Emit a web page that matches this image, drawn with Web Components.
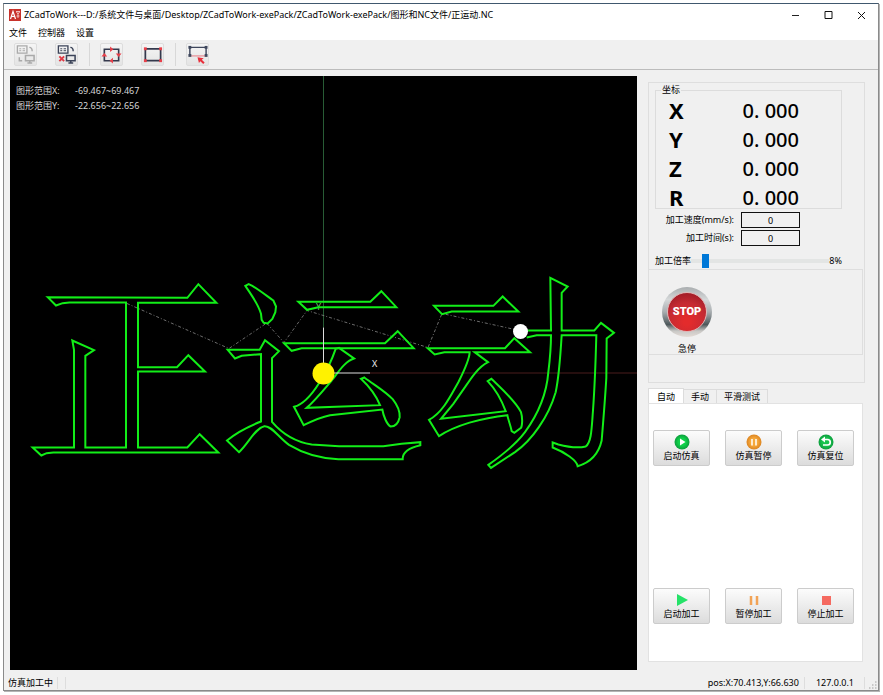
<!DOCTYPE html>
<html lang="zh-CN">
<head>
<meta charset="utf-8">
<title>ZCadToWork</title>
<style>
  html, body {
    height: 100%;
  }

  body {
    box-sizing: border-box;
    margin: 0;
    padding: 3px 4px 4px 3px;
    background: #fff;
    color: #000;
    font: 9px/12px "Noto Sans", "Noto Sans CJK SC", sans-serif;
  }
</style>
</head>
<body>
<cad-window></cad-window>

<script>
const base = `
  * {
    box-sizing: border-box;
  }

  button, input {
    font: inherit;
    color: inherit;
    margin: 0;
    padding: 0;
  }
`;

class TitleBar extends HTMLElement {
  constructor() {
    super();
    this.attachShadow({ mode: 'open' }).innerHTML = `
      <style>
        ${base}
        :host {
          display: flex;
          align-items: center;
          height: 22px;
          padding-left: 5px;
          background: #fff;
        }

        .logo {
          width: 12px;
          height: 12px;
          margin-right: 3px;
        }

        .title {
          flex: 1;
          white-space: nowrap;
        }

        button {
          width: 33px;
          height: 22px;
          border: 0;
          background: none;
        }

        button svg {
          display: block;
          margin: auto;
        }
      </style>
      <svg class="logo" viewBox="0 0 12 12">
        <rect width="12" height="12" fill="#c8322b"/>
        <path d="M1.500 10 4 2.500 6.500 10M2.400 7.500h3.200" fill="none" stroke="#fff" stroke-width="1.200"/>
        <path d="M7 2.500h4M7.500 3l1.500 2 1.500-2M9 5v4M7.500 7h3" fill="none" stroke="#f5cfcb" stroke-width=".9"/>
      </svg>
      <span class="title"><slot></slot></span>
      <button aria-label="最小化"><svg width="9" height="9"><path d="M1 4.500h7" stroke="#222"/></svg></button>
      <button aria-label="最大化"><svg width="9" height="9"><path d="M1 .5h7v7H1z" fill="none" stroke="#111"/></svg></button>
      <button aria-label="关闭"><svg width="9" height="9"><path d="m1 1 7 7M8 1 1 8" stroke="#111"/></svg></button>
    `;
  }
}
customElements.define('title-bar', TitleBar);

class MenuBar extends HTMLElement {
  constructor() {
    super();
    this.attachShadow({ mode: 'open' }).innerHTML = `
      <style>
        ${base}
        :host {
          display: flex;
          gap: 11px;
          height: 14px;
          padding-left: 5px;
          background: #fff;
        }

        button {
          height: 14px;
          border: 0;
          background: none;
        }
      </style>
      <button>文件</button><button>控制器</button><button>设置</button>
    `;
  }
}
customElements.define('menu-bar', MenuBar);

const link = (ink, mark) => `
  <g fill="none" stroke="${ink}">
    <path d="M2.500 2h10v7.500h-10z" stroke-width="1.400"/>
    <path d="M4.500 5h2M8 5h2.500M4.500 7h2M8 7h2.500"/>
    <path d="M15 3.500q3 0 3 4" stroke-width="1.500"/>
    <path d="M11 12h9v5.500h-9zM15.500 17.500v2M13 20h5" stroke-width="1.600"/>
    ${mark}
  </g>`;
const corners = (size, ...points) => points
  .map(([x, y]) => `<rect x="${x - size / 2}" y="${y - size / 2}" width="${size}" height="${size}"/>`)
  .join('');

const toolIcons = {
  connect: link('#aaa', '<path d="M4.500 14v3.500h3" stroke-width="1.500"/>'),
  disconnect: link('#3b4358', '<path d="m3.500 13 5 5M8.500 13l-5 5" stroke="#e03a45" stroke-width="2"/>'),
  track: `
    <path d="M3.500 5.500h15v12h-15z" fill="none" stroke="#34394d" stroke-width="1.700"/>
    <g fill="#e8404a">
      <path d="M9.500 2.500 13 5.500 9.500 8.500zM12.500 14.500 9 17.500 12.500 20.500zM15.500 10h6l-3 3.500zM.5 13h6l-3-3.500z"/>
    </g>`,
  frame: `
    <path d="M3.500 5h16v12.500h-16z" fill="none" stroke="#34394d" stroke-width="1.800"/>
    <g fill="#e8404a">${corners(3, [3.5, 5], [19.5, 5], [3.5, 17.5], [19.5, 17.5])}</g>`,
  select: `
    <path d="M3 12V3.500h17V12" fill="none" stroke="#3f475d" stroke-width="1.500"/>
    <path d="M4 12.500h15" stroke="#e87880"/>
    <g fill="#3f475d">${corners(3, [3, 3.5], [20, 3.5], [3, 12], [20, 12])}</g>
    <path d="m11 14 6.500 1-2 1.500 3 3-1.500 1.500-3-3-1.500 2z" fill="#e8303c"/>`,
};

class ToolButton extends HTMLElement {
  constructor() {
    super();
    this.attachShadow({ mode: 'open' });
  }

  connectedCallback() {
    this.shadowRoot.innerHTML = `
      <style>
        ${base}
        :host {
          display: block;
        }

        button {
          display: block;
          width: 23px;
          height: 23px;
          border: 1px solid #ddd;
          border-radius: 2px;
          background: linear-gradient(#f5f5f5, #e4e4e4);
        }

        svg {
          display: block;
        }
      </style>
      <button aria-label="${this.getAttribute('label')}">
        <svg width="21" height="21" viewBox="0 0 22 22">${toolIcons[this.getAttribute('icon')]}</svg>
      </button>
    `;
  }
}
customElements.define('tool-button', ToolButton);

class ToolBar extends HTMLElement {
  constructor() {
    super();
    this.attachShadow({ mode: 'open' }).innerHTML = `
      <style>
        ${base}
        :host {
          display: flex;
          align-items: center;
          gap: 18px;
          height: 30px;
          padding-left: 10px;
          border-bottom: 1px solid #bcbcbc;
        }

        i {
          width: 1px;
          height: 23px;
          margin: 0 -8px 0 -7px;
          background: #d8d8d8;
        }
      </style>
      <tool-button icon="connect" label="连接"></tool-button>
      <tool-button icon="disconnect" label="断开"></tool-button>
      <i></i>
      <tool-button icon="track" label="轨迹"></tool-button>
      <tool-button icon="frame" label="边框"></tool-button>
      <i></i>
      <tool-button icon="select" label="选择"></tool-button>
    `;
  }
}
customElements.define('tool-bar', ToolBar);

// Tool path contours, three units to a screen pixel, one group per part.
const parts = [
  {
    origin: '20 270',
    contours: [
      'M83 80 108 105 128 98 148 96H318V531H196V256L222 239 157 210 162 238V531H38L64 555 80 548 100 546H595L539 491 502 531H354V303H555L505 254 471 290H354V97H589L535 41 502 82Z',
    ],
  },
  {
    origin: '215 270',
    contours: [
      'M91 46 101 41 112 46C132 58 150 72 175 90L183 108 181 125 172 145 158 159 146 157 140 148 138 130C130 100 110 75 91 46Z',
      'M38 238H134L150 209 192 242 171 263V454C200 488 240 514 290 522L372 527H505L560 520 616 515V524C590 530 562 542 563 566H370C320 564 270 552 222 523C190 500 170 465 148 467C120 473 100 520 72 545L36 510C60 490 100 468 138 453V251L80 256 60 264Z',
      'M250 94H466L499 62 544 110H310L276 118Z',
      'M207 218H510L548 182 596 233H260L230 241Z',
      'M372 232 417 264C390 272 370 305 350 330 320 365 300 390 275 412L495 404C485 380 465 350 438 325L448 321C480 345 510 362 533 386 548 405 555 425 554 440 550 458 540 468 527 468 515 462 505 435 502 417L345 434C315 440 290 452 266 464L237 409C270 400 295 365 312 338 330 310 350 270 362 235Z',
    ],
  },
  {
    origin: '415 260',
    contours: [
      'M57 136H235L263 108 310 153H110L81 161Z',
      'M38 263H270L298 233 345 275H179L219 305C190 320 170 350 150 380L115 430 78 475 272 452C262 425 245 390 218 362L229 355C260 385 300 420 318 455 324 475 321 498 318 502L298 517 290 512C287 495 280 480 277 464 200 472 120 495 72 527L42 478C85 455 110 400 130 365 145 335 163 300 164 275H88L59 282Z',
      'M338 210H408L406 52 458 78 440 97V210H538L558 187 597 217 575 234 574 352C570 420 565 480 560 540 552 575 530 605 488 617 486 600 450 575 413 561V546L430 552C460 560 490 563 512 558 530 545 530 500 534 450 539 380 542 300 544 224H440C436 290 432 350 422 395 400 470 350 540 300 575L228 622 220 613C260 585 300 555 330 515 370 460 395 400 400 335 405 295 408 260 408 224H365L335 231',
    ],
  },
];

class PathView extends HTMLElement {
  constructor() {
    super();
    this.attachShadow({ mode: 'open' }).innerHTML = `
      <style>
        ${base}
        :host {
          display: grid;
          min-width: 0;
          min-height: 0;
          overflow: hidden;
          background: #000;
          color: #d6d6d6;
        }

        svg, dl {
          grid-area: 1 / 1;
        }

        svg {
          width: 100%;
          height: 100%;
          min-height: 0;
          overflow: visible;
        }

        dl {
          display: grid;
          grid-template-columns: 59px auto;
          grid-auto-rows: 15px;
          place-self: start;
          margin: 0;
          padding: 7px 6px;
          line-height: 15px;
        }

        dd {
          margin: 0;
        }

        .cut {
          fill: none;
          stroke: #12ee18;
          stroke-width: 2;
        }

        .cut path {
          vector-effect: non-scaling-stroke;
        }

        .travel {
          fill: none;
          stroke: #888;
          stroke-dasharray: 3 2 1 2;
          stroke-width: .8;
        }

        text {
          font-size: 9px;
          fill: #eee;
        }
      </style>
      <svg viewBox="10 76 627 593" role="img" aria-label="加工轨迹">
        <path d="M323.500 -400V327" stroke="#285c35"/>
        <path d="M370 372.500H1400" stroke="#4a1c1c"/>
        <path class="travel" d="M127 303 229 348 266 323M267 323 284 342 307 310 428 347 442 313 515 329"/>
        <text x="316" y="309" style="fill: #6fc46f">Y</text>
        <g class="cut">
          ${parts.map((part) => `
            <g transform="translate(${part.origin}) scale(.33333)">
              ${part.contours.map((d) => `<path d="${d}"/>`).join('')}
            </g>`).join('')}
        </g>
        <path d="M323.500 327V372.500H370" fill="none" stroke="#ddd"/>
        <text x="372" y="366">X</text>
        <circle cx="323.500" cy="373" r="11" fill="#fff200"/>
        <circle cx="520.500" cy="331" r="7.500" fill="#fff"/>
      </svg>
      <dl>
        <dt>图形范围X:</dt><dd>-69.467~69.467</dd>
        <dt>图形范围Y:</dt><dd>-22.656~22.656</dd>
      </dl>
    `;
  }
}
customElements.define('path-view', PathView);

class AxisReadout extends HTMLElement {
  constructor() {
    super();
    const rows = ['X', 'Y', 'Z', 'R'].map((axis) => `
      <dt>${axis}</dt><dd>0. 000</dd>`).join('');

    this.attachShadow({ mode: 'open' }).innerHTML = `
      <style>
        ${base}
        :host {
          display: block;
        }

        fieldset {
          min-width: 0;
          margin: 0;
          padding: 0 42px 0 13px;
          border: 1px solid #dcdcdc;
        }

        legend {
          margin-left: -8px;
          padding: 0 1px;
          line-height: 12px;
        }

        dl {
          display: grid;
          grid-template-columns: 1fr auto;
          grid-auto-rows: 29px;
          align-items: center;
          margin: 0 0 -4px;
        }

        dt {
          font-size: 22px;
          font-weight: 700;
          line-height: 29px;
        }

        dd {
          margin: 0;
          font-size: 20px;
          font-weight: 500;
          line-height: 29px;
        }
      </style>
      <fieldset>
        <legend>坐标</legend>
        <dl>${rows}</dl>
      </fieldset>
    `;
  }
}
customElements.define('axis-readout', AxisReadout);

class StopButton extends HTMLElement {
  constructor() {
    super();
    this.attachShadow({ mode: 'open' }).innerHTML = `
      <style>
        ${base}
        :host {
          display: block;
        }

        button {
          display: flex;
          flex-direction: column;
          align-items: center;
          gap: 6px;
          border: 0;
          background: none;
        }

        .ring {
          display: grid;
          width: 50px;
          height: 50px;
          padding: 5px;
          border-radius: 50%;
          background: linear-gradient(#a9adaf, #d5d8d9 25%, #a8adb0 50%, #4d585b 75%, #c9c8c6 88%, #e4dcd6);
        }

        .cap {
          display: grid;
          place-items: center;
          border: 1px solid #e2b5b5;
          border-radius: 50%;
          background: radial-gradient(circle at 50% 75%, #e32b2c 10%, #c42a33 55%, #8f1420);
          color: #fff;
          font: 900 11px/12px Roboto, sans-serif;
        }
      </style>
      <button>
        <span class="ring"><span class="cap">STOP</span></span>
        <span>急停</span>
      </button>
    `;
  }
}
customElements.define('stop-button', StopButton);

class StatePanel extends HTMLElement {
  constructor() {
    super();
    this.attachShadow({ mode: 'open' }).innerHTML = `
      <style>
        ${base}
        :host {
          display: flex;
          flex-direction: column;
          height: 301px;
          border: 1px solid #dedede;
        }

        axis-readout {
          margin: 1px 22px 0 6px;
        }

        .fields {
          display: grid;
          grid-template-columns: 1fr 59px;
          gap: 2px 7px;
          align-items: center;
          margin: 3px 64px 0 6px;
          text-align: right;
        }

        .fields input {
          width: 59px;
          height: 16px;
          border: 1px solid #111;
          border-radius: 0;
          background: #f0f0f0;
          text-align: center;
        }

        .rate {
          display: grid;
          grid-template-columns: auto 1fr auto;
          align-items: center;
          height: 16px;
          margin: 7px 22px 0 6px;
        }

        input[type=range] {
          appearance: none;
          width: 100%;
          min-width: 0;
          height: 14px;
          background: none;
        }

        input[type=range]::-webkit-slider-runnable-track {
          height: 4px;
          background: #e3e5e4;
        }

        input[type=range]::-webkit-slider-thumb {
          appearance: none;
          width: 7px;
          height: 14px;
          margin-top: -5px;
          background: #0078d7;
        }

        .stop {
          margin-right: 1px;
          padding: 17px 0 0 13px;
          height: 86px;
          border: solid #dedede;
          border-width: 1px 1px 1px 0;
        }
      </style>
      <axis-readout></axis-readout>
      <div class="fields">
        <label for="speed">加工速度(mm/s):</label><input id="speed" value="0">
        <label for="time">加工时间(s):</label><input id="time" value="0">
      </div>
      <div class="rate">
        <label for="rate">加工倍率</label>
        <input id="rate" type="range" min="0" max="100" value="8">
        <output for="rate">8%</output>
      </div>
      <div class="stop"><stop-button></stop-button></div>
    `;
  }
}
customElements.define('state-panel', StatePanel);

const disc = (name, from, to) => `
  <defs>
    <radialGradient id="${name}">
      <stop offset=".5" stop-color="${from}"/><stop offset="1" stop-color="${to}"/>
    </radialGradient>
  </defs>
  <circle cx="8" cy="8" r="7.500" fill="url(#${name})"/>`;

const actionIcons = {
  simulate: `${disc('green', '#10d04a', '#0d9d3d')}<path d="M6 4.500v7L11.500 8z" fill="#fff"/>`,
  suspend: `${disc('orange', '#f5a83c', '#dc8420')}<path d="M6 5v6.500M10 5v6.500" stroke="#fff" stroke-width="1.500"/>`,
  reset: `${disc('green', '#18c44e', '#0d9d3d')}
    <path d="M6 5.500h3.500a2.700 2.700 0 0 1 0 5.500H5" fill="none" stroke="#fff" stroke-width="1.700"/>
    <path d="M7 2.500v6L3 5.500z" fill="#fff"/>`,
  start: '<path d="M3 2v12l11-6z" fill="#25e268"/>',
  pause: '<path d="M5 4v9M11 4v9" stroke="#f2a356" stroke-width="2.500"/>',
  stop: '<path d="M4 4h9v9H4z" fill="#f56a60"/>',
};

class ActionButton extends HTMLElement {
  constructor() {
    super();
    this.attachShadow({ mode: 'open' });
  }

  connectedCallback() {
    this.shadowRoot.innerHTML = `
      <style>
        ${base}
        :host {
          display: block;
        }

        button {
          display: flex;
          flex-direction: column;
          align-items: center;
          justify-content: center;
          width: 100%;
          height: 36px;
          border: 1px solid #ccc;
          border-radius: 2px;
          background: linear-gradient(#fcfcfc, #dcdcdc);
        }
      </style>
      <button>
        <svg width="16" height="16" viewBox="0 0 16 16">${actionIcons[this.getAttribute('icon')]}</svg>
        <span><slot></slot></span>
      </button>
    `;
  }
}
customElements.define('action-button', ActionButton);

class ControlTabs extends HTMLElement {
  constructor() {
    super();
    this.attachShadow({ mode: 'open' }).innerHTML = `
      <style>
        ${base}
        :host {
          display: flex;
          flex-direction: column;
          min-height: 0;
        }

        .tabs {
          display: flex;
          align-items: flex-end;
        }

        .tabs button {
          height: 14px;
          padding: 0 7px;
          border: 1px solid #dcdcdc;
          border-width: 1px 1px 0 0;
          background: #f0f0f0;
          line-height: 13px;
        }

        .tabs button[aria-selected=true] {
          height: 16px;
          margin-bottom: -1px;
          padding: 0 8px;
          border-left-width: 1px;
          background: #fff;
        }

        .pane {
          display: flex;
          flex: 1;
          flex-direction: column;
          justify-content: space-between;
          padding: 26px 8px 37px 4px;
          border: 1px solid #e2e2e2;
          background: #fff;
        }

        .row {
          display: grid;
          grid-template-columns: repeat(3, 1fr);
          gap: 15px;
        }
      </style>
      <div class="tabs" role="tablist">
        <button role="tab" aria-selected="true">自动</button>
        <button role="tab" aria-selected="false">手动</button>
        <button role="tab" aria-selected="false">平滑测试</button>
      </div>
      <div class="pane" role="tabpanel">
        <div class="row">
          <action-button icon="simulate">启动仿真</action-button>
          <action-button icon="suspend">仿真暂停</action-button>
          <action-button icon="reset">仿真复位</action-button>
        </div>
        <div class="row">
          <action-button icon="start">启动加工</action-button>
          <action-button icon="pause">暂停加工</action-button>
          <action-button icon="stop">停止加工</action-button>
        </div>
      </div>
    `;
  }
}
customElements.define('control-tabs', ControlTabs);

class StatusBar extends HTMLElement {
  constructor() {
    super();
    this.attachShadow({ mode: 'open' }).innerHTML = `
      <style>
        ${base}
        :host {
          display: flex;
          align-items: center;
          height: 14px;
          padding: 0 1px 0 4px;
        }

        .state {
          display: flex;
          flex: 1;
        }

        .state span {
          padding-right: 4px;
          border-right: 1px solid #ddd;
        }

        .state i {
          width: 8px;
          border-right: 1px solid #ddd;
        }

        .pos {
          padding-right: 5px;
          border-right: 1px solid #ddd;
        }

        .host {
          padding: 0 10px 0 11px;
          border-right: 1px solid #ddd;
        }

        svg {
          margin: 4px 0 0 4px;
        }
      </style>
      <div class="state"><span>仿真加工中</span><i></i></div>
      <span class="pos">pos:X:70.413,Y:66.630</span>
      <span class="host">127.0.0.1</span>
      <svg width="8" height="8"><path d="M6 1h1.500M3 4h1.500M6 4h1.500M0 7h1.500M3 7h1.500M6 7h1.500" stroke="#bbb" stroke-width="1.500"/></svg>
    `;
  }
}
customElements.define('status-bar', StatusBar);

class CadWindow extends HTMLElement {
  constructor() {
    super();
    this.attachShadow({ mode: 'open' }).innerHTML = `
      <style>
        ${base}
        :host {
          box-sizing: border-box;
          display: flex;
          flex-direction: column;
          height: 100%;
          border: 1px solid #8a8a8a;
          border-top-color: #40586e;
          background: #f0f0f0;
          box-shadow: 1px 1px #b4b4b4;
        }

        main {
          display: flex;
          flex: 1;
          gap: 11px;
          min-height: 0;
          padding: 6px 13px 6px 6px;
        }

        path-view {
          flex: 1;
        }

        aside {
          display: flex;
          flex-direction: column;
          gap: 5px;
          width: 217px;
          padding: 6px 0 8px;
        }

        control-tabs {
          flex: 1;
          margin-right: 2px;
        }
      </style>
      <title-bar>ZCadToWork---D:/系统文件与桌面/Desktop/ZCadToWork-exePack/ZCadToWork-exePack/图形和NC文件/正运动.NC</title-bar>
      <menu-bar></menu-bar>
      <tool-bar></tool-bar>
      <main>
        <path-view></path-view>
        <aside>
          <state-panel></state-panel>
          <control-tabs></control-tabs>
        </aside>
      </main>
      <status-bar></status-bar>
    `;
  }
}
customElements.define('cad-window', CadWindow);
</script>
</body>
</html>
